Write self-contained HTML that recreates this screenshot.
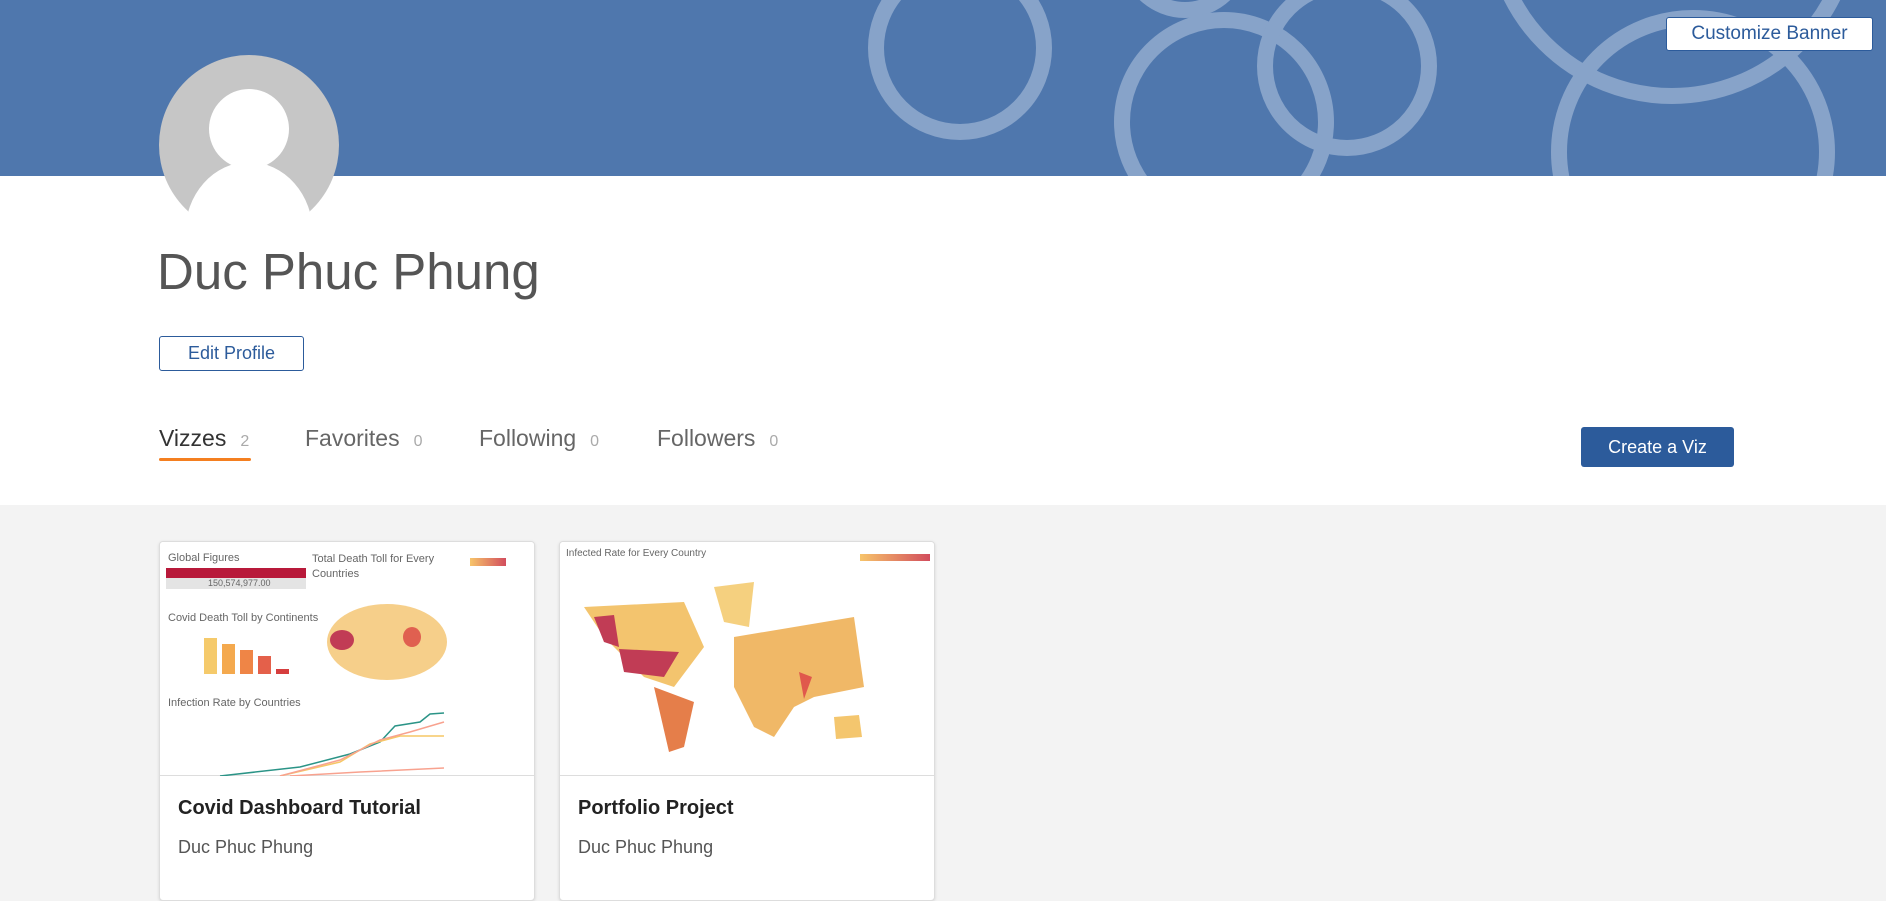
<!DOCTYPE html>
<html><head><meta charset="utf-8"><style>
*{margin:0;padding:0;box-sizing:border-box}
body{width:1886px;height:884px;overflow:hidden;background:#f3f3f3;font-family:"Liberation Sans",sans-serif;position:relative}
.banner{position:absolute;left:0;top:0;width:1886px;height:176px;background:#4f77ad;overflow:hidden}
.white{position:absolute;left:0;top:176px;width:1886px;height:329px;background:#fff}
.btn{position:absolute;background:#fff;border:1px solid #2c5b9b;border-radius:3px;color:#2c5b9b;text-align:center}
.tab{position:absolute;top:425px;font-size:23px;color:#666}
.tab span{font-size:16px;color:#aaa;margin-left:14px}
.card{position:absolute;top:541px;width:376px;height:360px;background:#fff;border:1px solid #ddd;border-radius:4px;box-shadow:0 1px 3px rgba(0,0,0,.12);overflow:hidden}
.thumb{position:absolute;left:0;top:0;width:376px;height:234px;border-bottom:1px solid #ddd;background:#fff}
.ct{position:absolute;left:18px;top:255px;font-size:20px;font-weight:bold;color:#222}
.ca{position:absolute;left:18px;top:295px;font-size:18px;color:#555}
.s{position:absolute;font-size:9px;color:#666;white-space:nowrap}
</style></head><body>
<div class="banner">
<svg width="1886" height="176" style="position:absolute;left:0;top:0" fill="none" stroke="#87a3c9" stroke-width="16">
<circle cx="960" cy="48" r="84"/>
<circle cx="1185" cy="-48" r="58"/>
<circle cx="1224" cy="122" r="102"/>
<circle cx="1347" cy="66" r="82"/>
<circle cx="1672" cy="-84" r="180"/>
<circle cx="1693" cy="152" r="134"/>
</svg>
</div>
<div class="white"></div>
<div class="btn" style="left:1666px;top:17px;width:207px;height:34px;font-size:19px;line-height:32px">Customize Banner</div>
<svg width="182" height="182" style="position:absolute;left:158px;top:54px">
<defs><clipPath id="c"><circle cx="91" cy="91" r="90"/></clipPath></defs>
<g clip-path="url(#c)">
<rect width="182" height="182" fill="#c6c6c6"/>
<circle cx="91" cy="75" r="40" fill="#fff"/>
<ellipse cx="91" cy="180" rx="64" ry="72" fill="#fff"/>
</g>
<rect x="0" y="158" width="182" height="30" fill="#fff"/>
</svg>
<div style="position:absolute;left:157px;top:242px;font-size:51px;color:#555">Duc Phuc Phung</div>
<div class="btn" style="left:159px;top:336px;width:145px;height:35px;font-size:18px;line-height:33px">Edit Profile</div>
<div class="tab" style="left:159px;color:#333">Vizzes<span>2</span></div>
<div style="position:absolute;left:159px;top:458px;width:92px;height:3px;background:#f47f20;border-radius:2px"></div>
<div class="tab" style="left:305px">Favorites<span>0</span></div>
<div class="tab" style="left:479px">Following<span>0</span></div>
<div class="tab" style="left:657px">Followers<span>0</span></div>
<div style="position:absolute;left:1581px;top:427px;width:153px;height:40px;background:#2c5b9b;border-radius:3px;color:#fff;font-size:18px;line-height:40px;text-align:center">Create a Viz</div>

<div class="card" style="left:159px">
<div class="thumb">
<div class="s" style="left:8px;top:10px;font-size:11px">Global Figures</div>
<div style="position:absolute;left:6px;top:26px;width:140px;height:10px;background:#b8193a"></div>
<div style="position:absolute;left:6px;top:36px;width:140px;height:11px;background:#e4e4e4"></div>
<div class="s" style="left:48px;top:36px">150,574,977.00</div>
<div class="s" style="left:152px;top:10px;font-size:11px;line-height:15px">Total Death Toll for Every<br>Countries</div>
<div style="position:absolute;left:310px;top:16px;width:36px;height:8px;background:linear-gradient(90deg,#f7c46a,#d24d5d)"></div>
<div class="s" style="left:8px;top:70px;font-size:11px">Covid Death Toll by Continents</div>
<div style="position:absolute;left:44px;top:96px;width:13px;height:36px;background:#f5ca6b"></div>
<div style="position:absolute;left:62px;top:102px;width:13px;height:30px;background:#f4a94e"></div>
<div style="position:absolute;left:80px;top:108px;width:13px;height:24px;background:#ef8546"></div>
<div style="position:absolute;left:98px;top:114px;width:13px;height:18px;background:#e4604a"></div>
<div style="position:absolute;left:116px;top:127px;width:13px;height:5px;background:#d63e3e"></div>
<svg style="position:absolute;left:152px;top:50px" width="150" height="112"><ellipse cx="75" cy="50" rx="60" ry="38" fill="#f4c36d" opacity=".8"/><ellipse cx="30" cy="48" rx="12" ry="10" fill="#c13c55"/><ellipse cx="100" cy="45" rx="9" ry="10" fill="#e06050"/></svg>
<div class="s" style="left:8px;top:155px;font-size:11px">Infection Rate by Countries</div>
<svg style="position:absolute;left:20px;top:170px" width="320" height="64" fill="none" stroke-width="1.5"><polyline stroke="#2b9487" points="40,64 120,55 170,42 200,30 215,14 240,10 250,2 264,1"/><polyline stroke="#f6c765" points="100,64 160,50 190,32 220,24 264,24"/><polyline stroke="#f8a28f" points="100,64 160,48 200,28 230,20 264,10"/><polyline stroke="#f8a28f" points="110,64 180,60 264,56"/></svg>
</div>
<div class="ct">Covid Dashboard Tutorial</div>
<div class="ca">Duc Phuc Phung</div>
</div>

<div class="card" style="left:559px">
<div class="thumb">
<div class="s" style="left:6px;top:6px;font-size:10px">Infected Rate for Every Country</div>
<div style="position:absolute;left:300px;top:12px;width:70px;height:7px;background:linear-gradient(90deg,#f7c46a,#d24d5d)"></div>
<svg style="position:absolute;left:4px;top:35px" width="300" height="200"><path d="M20 30 L120 25 L140 70 L110 110 L80 100 L40 60Z" fill="#f3c46e"/><path d="M30 40 L50 38 L55 70 L40 65Z" fill="#c13c55"/><path d="M55 72 L115 75 L100 100 L60 95Z" fill="#c13c55"/><path d="M90 110 L130 125 L120 170 L105 175Z" fill="#e57e4a"/><path d="M150 10 L190 5 L185 50 L160 45Z" fill="#f5d07f"/><path d="M170 60 L290 40 L300 110 L250 120 L230 130 L210 160 L190 150 L170 110Z" fill="#f0b867"/><path d="M235 95 L248 100 L240 122Z" fill="#e0584c"/><path d="M270 140 L295 138 L298 160 L272 162Z" fill="#f4c66e"/></svg>
</div>
<div class="ct">Portfolio Project</div>
<div class="ca">Duc Phuc Phung</div>
</div>
</body></html>
